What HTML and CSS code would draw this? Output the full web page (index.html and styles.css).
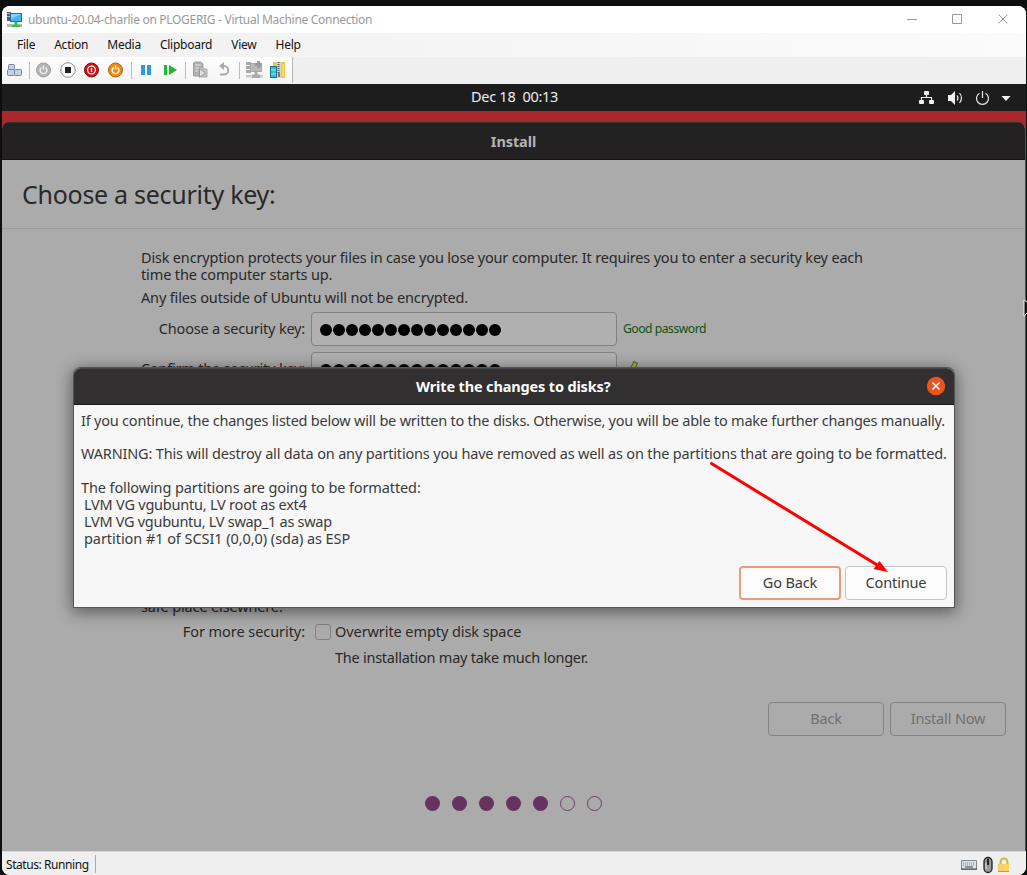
FILE: index.html
```html
<!DOCTYPE html>
<html lang="en">
<head>
<meta charset="utf-8">
<title>ubuntu-20.04-charlie on PLOGERIG - Virtual Machine Connection</title>
<link rel="stylesheet" href="styles.css">
</head>
<body>
<div class="window">
  <header class="titlebar">
    <svg class="app-icon" width="17" height="17" viewBox="0 0 17 17"><path d="M1 1h4v9H1z" fill="#5c5c5c"/><path d="M1 2.500h3M1 5.500h3" stroke="#bbb"/><path d="M4 2h12v9H4z" fill="#1674ad"/><path d="M5 3h10v7H5z" fill="#42b4f0"/><path d="M5 3h10L5 8z" fill="#83d4ff"/><path d="M8.500 11h3v2.500h2.500V16H6v-2.500h2.500z" fill="#35bd4a"/><path d="M1 13h5v3H1zM14 13h2v3h-2z" fill="#b5b5b5"/></svg>
    <span class="app-title">ubuntu-20.04-charlie on PLOGERIG - Virtual Machine Connection</span>
    <svg class="caption" width="104" height="12" viewBox="0 0 104 12"><path d="M0 6.500h10M45.500 1.500h9v9h-9zM91.500 1.500l9 9M100.500 1.500l-9 9" fill="none" stroke="#999"/></svg>
  </header>
  <nav class="menu"><span>File</span><span>Action</span><span>Media</span><span>Clipboard</span><span>View</span><span>Help</span></nav>
  <div class="toolbar">
    <div class="tools">
      <svg width="290" height="26" viewBox="2 57 290 26">
        <g fill="#c6d1e5" stroke="#76849d"><rect x="8.500" y="64.500" width="6" height="5" rx="1"/><rect x="7.500" y="69.500" width="7" height="6" rx="1"/><rect x="14.500" y="69.500" width="7" height="6" rx="1"/></g>
        <path d="M29.500 62v17M131.500 62v17M185.500 62v17M239.500 62v17" stroke="#bbb"/>
        <circle cx="43.500" cy="70" r="7" fill="#b3b3b3" stroke="#a0a0a0"/><path d="M41.500 67.500a3.400 3.400 0 1 0 4 0M43.500 65.500v4" fill="none" stroke="#eee" stroke-width="1.400"/>
        <circle cx="68" cy="70" r="7.300" fill="#fff" stroke="#8d8d8d"/><path d="M65 67h6v6h-6z" fill="#222"/>
        <circle cx="91.500" cy="70" r="7" fill="#d40e10" stroke="#7b1717"/><circle cx="91.500" cy="70" r="3.900" fill="none" stroke="#fff" stroke-width="1.300"/><path d="M91.500 68v4" stroke="#fff" stroke-width="1.400"/>
        <circle cx="115.500" cy="70" r="7" fill="#ee8b0c" stroke="#a96417"/><path d="M113.500 67.500a3.400 3.400 0 1 0 4 0M115.500 65.500v4" fill="none" stroke="#fff" stroke-width="1.400"/>
        <path d="M141 65h4v10h-4zM147 65h4v10h-4z" fill="#3296e0"/><path d="M164 65h3v10h-3zM169 65l8 5-8 5z" fill="#1cba2d"/>
        <path d="M193.500 63l1-1h6l2.500 2v12h-9.500z" fill="#b0b0b0" stroke="#a0a0a0"/><path d="M195 65h6M195 68h6M195 71h3" stroke="#e2e2e2"/><path d="M199 67.500h4l1 1.500h3v8h-6" fill="#c4c4c4" stroke="#aaa"/><path d="M199.500 68.500l6 4.500-6 4.500z" fill="#ddd" stroke="#999"/>
        <path d="M222 66h2a4 4 0 0 1 0 8.500h-4" fill="none" stroke="#aaa" stroke-width="2"/><path d="M224 62v8l-5-4z" fill="#aaa"/>
        <path d="M246 62h5v3h-5zM246 66h5v3h-5zM246 70h5v3h-5z" fill="#a8a8a8"/><path d="M250.500 63.500h11v8h-11z" fill="#b8b8b8" stroke="#a5a5a5"/><path d="M254.500 72h3v2.500h3V78h-9v-3.500h3z" fill="#aaa"/><path d="M246 75h5v2.500h-5zM261 75h2v2.500h-2z" fill="#ccc"/><path d="M258.500 61v7M255 64.500h7" stroke="#999" stroke-width="3"/>
        <path d="M273 62h12v16h-12z" fill="#f0c743"/><path d="M276 62h5v16h-5z" fill="#d9d4bd"/><path d="M278.500 62v12" stroke="#555" stroke-width="2" stroke-dasharray="1 1"/><path d="M279 73v4" stroke="#777" stroke-width="2"/><path d="M270.500 66.500h6v11h-6z" fill="#32c2cd" stroke="#18727d"/><path d="M271 70h5M271 74h5" stroke="#8ce9ee"/><path d="M283 64v13" stroke="#ffe79a"/>
      </svg>
    </div>
  </div>

  <div class="guest">
    <div class="topbar">
      <span class="clock">Dec 18&nbsp; 00:13</span>
      <svg class="tray" width="94" height="16" viewBox="918 89 94 16"><g fill="#f2f2f2"><rect x="924" y="90" width="5" height="4" rx="1"/><rect x="919" y="99" width="5" height="4" rx="1"/><rect x="929" y="99" width="5" height="4" rx="1"/><path d="M948 94h3l4-4v14l-4-4h-3zM1001.500 95h9l-4.500 5z"/></g><path d="M926.500 93v3.500M921.500 99v-2.500h10v2.500M957 94.500q2 2.500 0 5M959.500 92q4 5 0 10M979.500 92.200a6 6 0 1 0 6 0M982.500 90v7" fill="none" stroke="#e9e9e9" stroke-width="1.200"/></svg>
    </div>
    <div class="installer">
      <div class="install-head">Install</div>
      <h1 class="page-title"><span>Choose a security key:</span></h1>
      <main class="form">
        <p class="l1">Disk encryption protects your files in case you lose your computer. It requires you to enter a security key each</p>
        <p class="l2">time the computer starts up.</p>
        <p class="l3">Any files outside of Ubuntu will not be encrypted.</p>
        <div class="field-row"><label>Choose a security key:</label><div class="field"><i></i><i></i><i></i><i></i><i></i><i></i><i></i><i></i><i></i><i></i><i></i><i></i><i></i><i></i></div><span class="good">Good password</span></div>
        <div class="field-row"><label>Confirm the security key:</label><div class="field"><i></i><i></i><i></i><i></i><i></i><i></i><i></i><i></i><i></i><i></i><i></i><i></i><i></i><i></i></div><svg class="check" width="20" height="18" viewBox="0 0 20 18"><path d="M2 10l4 5 7-13" fill="none" stroke="#4f6926" stroke-width="5"/><path d="M2 10l4 5 6.500-12" fill="none" stroke="#a5b652" stroke-width="3"/></svg></div>
        <p class="safe">safe place elsewhere.</p>
        <div class="secure-row"><label class="lab3">For more security:</label><b class="checkbox"></b><span class="over">Overwrite empty disk space</span></div>
        <p class="longer">The installation may take much longer.</p>
      </main>
      <div class="nav-buttons"><button class="btn">Back</button><button class="btn">Install Now</button></div>
      <div class="dots"><i></i><i></i><i></i><i></i><i></i><i class="todo"></i><i class="todo"></i></div>
    </div>
  </div>
  <footer class="status"><span class="running">Status: Running</span>
    <svg class="devices" width="54" height="20" viewBox="959 853 54 20"><path d="M961.500 859.500h15v9h-15z" fill="#dfe3e6" stroke="#7d898f"/><path d="M963 862h12M963 864h12" stroke="#74828c" stroke-dasharray="1 1"/><path d="M961 868h16M965 866h8" stroke="#394753"/><rect x="984" y="856.500" width="8" height="15" rx="4" fill="#999" stroke="#222" stroke-width="1.300"/><path d="M988 858v6" stroke="#222" stroke-width="2"/><path d="M986 862v6" stroke="#ddd"/><path d="M1000.500 864v-3a3.500 3.500 0 0 1 7 0v3" fill="none" stroke="#d5b346" stroke-width="2"/><path d="M998 863h11v8h-11z" fill="#f4cf6b"/><path d="M1004 863h5v7h-5z" fill="#ffd45c"/><path d="M998 870.500h11" stroke="#cf9835"/></svg>
  </footer>
</div>

<section class="dialog">
  <div class="dialog-head"><span>Write the changes to disks?</span><svg class="close" width="20" height="20" viewBox="0 0 20 20"><circle cx="10" cy="10" r="9.200" fill="#e95420"/><path d="M6.500 6.500l7 7M13.500 6.500l-7 7" stroke="#fff" stroke-width="1.500"/></svg></div>
  <div class="dialog-body">
    <p class="d1">If you continue, the changes listed below will be written to the disks. Otherwise, you will be able to make further changes manually.</p>
    <p class="d2">WARNING: This will destroy all data on any partitions you have removed as well as on the partitions that are going to be formatted.</p>
    <p class="d3">The following partitions are going to be formatted:</p>
    <p class="part d4">LVM VG vgubuntu, LV root as ext4</p>
    <p class="part d5">LVM VG vgubuntu, LV swap_1 as swap</p>
    <p class="part d6">partition #1 of SCSI1 (0,0,0) (sda) as ESP</p>
    <div class="dialog-actions"><button class="btn focus">Go Back</button><button class="btn">Continue</button></div>
  </div>
</section>
<svg class="arrow" width="184" height="116" viewBox="706 458 184 116"><path d="M711.500 463.500L878 565.500" stroke="#f00" stroke-width="3" stroke-linecap="round"/><path d="M888 572l-14.500-3 6-8z" fill="#f00"/></svg>
<svg class="pointer" width="4" height="18" viewBox="0 0 4 18"><path d="M4 2L1 0v16l3-3" fill="#111" stroke="#eee"/></svg>
</body>
</html>
```

FILE: styles.css
```css
* { box-sizing: border-box; }
body { margin: 0; width: 1027px; height: 875px; overflow: hidden; padding: 6px 1px 0 2px; background: #0d0f0e; font: 14.5px/17px "Noto Sans", sans-serif; color: #3b3b3b; position: relative; }
p, h1 { margin: 0; font-weight: 400; white-space: nowrap; }
svg { display: block; flex: none; }
.window { height: 869px; border-radius: 8px; overflow: hidden; display: flex; flex-direction: column; background: #efefef; }
.titlebar { height: 27px; flex: none; background: #fff; display: flex; align-items: center; padding: 0 15px 1px 4px; font-size: 12px; color: #999; white-space: nowrap; }
.app-title { margin-left: 5px; letter-spacing: -.3px; }
.caption { margin-left: auto; }
.menu { height: 24px; flex: none; display: flex; align-items: center; gap: 19px; padding: 0 0 2px 15px; background: linear-gradient(90deg, #f0f0f0, #fbfbfb); color: #111; font-size: 12px; letter-spacing: -.25px; }
.toolbar { height: 27px; flex: none; background: #efefef; }
.tools { width: 291px; height: 26px; background: linear-gradient(#fdfdfd, #f5f5f5); border-right: 1px solid #b5b5b5; }
.guest { height: 767px; flex: none; padding-right: 1px; background: #aa272b; }
.topbar { height: 27px; margin-right: -1px; background: #1d1d1d; color: #eee; display: flex; align-items: center; padding: 0 14px 0 469px; }
.clock { padding-bottom: 2px; letter-spacing: -.28px; }
.tray { margin-left: auto; }
.installer { height: 729px; margin-top: 11px; background: #ababab; border-radius: 7px 7px 0 0; overflow: hidden; display: flex; flex-direction: column; }
.install-head { height: 38px; flex: none; background: #242122; border-top: 1px solid #353233; border-bottom: 1px solid #151315; color: #b4b4b4; font-weight: 700; display: flex; align-items: center; justify-content: center; letter-spacing: -.1px; }
.page-title { height: 69px; flex: none; border-bottom: 1px solid #9c9c9c; display: flex; align-items: center; padding-left: 20px; font-size: 25px; color: #292929; letter-spacing: -.28px; }
.form { height: 445px; flex: none; padding: 20px 0 0 139px; color: #292929; display: flex; flex-direction: column; align-items: flex-start; }
.l1 { letter-spacing: -.182px; }
.l2 { letter-spacing: -.13px; }
.l3 { margin: 6px 0; letter-spacing: -.155px; }
.field-row { height: 34px; margin-bottom: 6px; display: flex; align-items: center; margin-left: -20px; }
.field-row label { width: 184px; text-align: right; white-space: nowrap; letter-spacing: -.2px; padding-bottom: 2px; }
.field { width: 306px; height: 34px; margin: 0 6px; background: #b0b0b0; border: 1px solid #828282; border-radius: 4px; display: flex; align-items: center; gap: 1px; padding: 2px 8px 0; }
.field i { width: 12px; height: 12px; border-radius: 50%; background: #000; }
.good { font-size: 12.2px; color: #135013; letter-spacing: -.5px; padding-bottom: 2px; white-space: nowrap; }
.safe { margin-top: 206px; letter-spacing: -.15px; }
.secure-row { height: 17px; margin-top: 9px; display: flex; align-items: center; }
.lab3 { width: 164px; text-align: right; white-space: nowrap; letter-spacing: -.06px; padding-bottom: 2px; }
.checkbox { width: 16px; height: 16px; margin: -2px 4px 0 10px; border: 1px solid #828282; border-radius: 3px; }
.over { letter-spacing: -.08px; padding-bottom: 2px; }
.longer { margin: 8px 0 0 194px; letter-spacing: -.25px; }
.nav-buttons { display: flex; justify-content: flex-end; gap: 6px; padding-right: 19px; margin-top: 28px; }
.btn { font: inherit; height: 34px; border-radius: 4px; padding: 0 0 2px; color: #3b3b3b; background: #fcfcfc; border: 1px solid #c5c5c5; white-space: nowrap; letter-spacing: -.15px; }
.nav-buttons .btn { width: 116px; background: transparent; color: #707070; border-color: #848484; }
.dots { display: flex; gap: 12px; margin: 60px 0 0 423px; }
.dots i { width: 15px; height: 15px; border-radius: 50%; background: #66335f; }
.dots .todo { background: none; border: 1.3px solid #713f69; }
.status { height: 24px; flex: none; border-top: 1px solid #d7d7d7; background: #efefef; display: flex; align-items: center; padding: 1px 13px 0 4px; font-size: 12px; color: #111; }
.running { width: 90px; height: 18px; border-right: 1px solid #aaa; white-space: nowrap; letter-spacing: -.43px; line-height: 19px; }
.devices { margin: -1px 0 0 auto; }
.dialog { position: absolute; left: 74px; top: 368px; width: 880px; height: 239px; border-radius: 7px 7px 0 0; background: #f7f7f7; box-shadow: 0 0 0 1px #555, 0 3px 16px 2px rgba(0,0,0,.48); }
.dialog-head { height: 37px; border-radius: 7px 7px 0 0; background: #322f30; border-top: 1px solid #484546; border-bottom: 1px solid #1e1c1d; color: #fff; font-weight: 700; display: flex; align-items: center; padding: 0 8px 0 342px; letter-spacing: -.15px; }
.close { margin: -2px 0 0 auto; }
.dialog-body { padding: 7px 7px 0; white-space: nowrap; }
.d1 { letter-spacing: -.212px; }
.d2 { margin-top: 16px; letter-spacing: -.174px; }
.d3 { margin-top: 17px; letter-spacing: -.11px; }
.part { padding-left: 3px; }
.d4 { letter-spacing: -.22px; }
.d5 { letter-spacing: -.29px; }
.d6 { letter-spacing: -.06px; }
.dialog-actions { display: flex; justify-content: flex-end; gap: 4px; margin-top: 19px; }
.dialog-actions .btn { width: 102px; }
.dialog-actions .focus { border: 2px solid #eb9b7c; }
.arrow { position: absolute; left: 706px; top: 458px; }
.pointer { position: absolute; left: 1023px; top: 300px; }
```
